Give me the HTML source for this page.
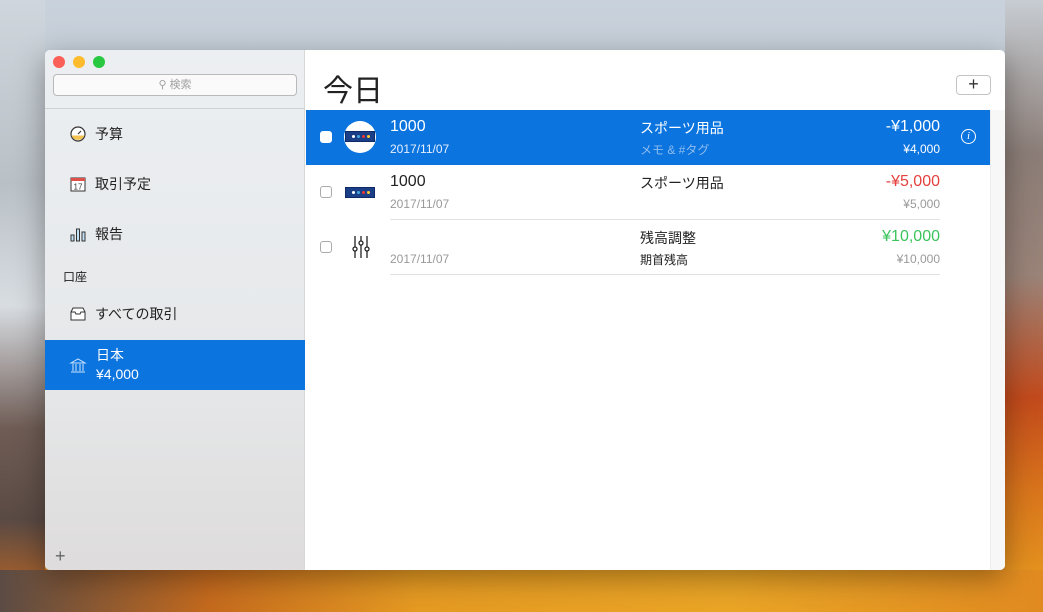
<!DOCTYPE html>
<html><head><meta charset="utf-8"><style>
*{margin:0;padding:0;box-sizing:border-box}
body{width:1043px;height:612px;overflow:hidden;position:relative;font-family:"Liberation Sans","Noto Sans CJK JP",sans-serif;
background:linear-gradient(180deg,#c9d2dc 0%,#b7c0c9 40%,#7d6a62 70%,#c9731f 88%,#e89a22 100%);}
.bgl{position:absolute;left:0;top:0;width:45px;height:612px;background:linear-gradient(180deg,#cfd6dd 0%,#b9c0c6 30%,#d8dde2 50%,#6f5c55 70%,#5a4a44 85%,#c86a20 100%)}
.bgr{position:absolute;right:0;top:0;width:38px;height:612px;background:linear-gradient(180deg,#c7cdd3 0%,#8b7d77 25%,#9a8378 45%,#c24a1c 65%,#d8741c 80%,#e9a020 100%)}
.bgb{position:absolute;left:0;top:570px;width:1043px;height:42px;background:linear-gradient(90deg,#5b4b44 0%,#c46a1e 20%,#e59a22 40%,#eaa526 70%,#e08a20 100%)}
.win{position:absolute;left:45px;top:50px;width:960px;height:520px;border-radius:5px;overflow:hidden;box-shadow:0 8px 30px rgba(0,0,0,.35);background:#fff}
.side{position:absolute;left:0;top:0;width:260px;height:520px;background:linear-gradient(180deg,#eceff2 0%,#e6e8ea 60%,#dedcdc 100%);border-right:1px solid #d8d8d8}
.dot{position:absolute;top:6px;width:12px;height:12px;border-radius:50%}
.search{position:absolute;left:8px;top:24px;width:244px;height:22px;border:1px solid #b9b9b9;border-radius:4px;background:#fafafa;font-size:11px;color:#a0a0a0;text-align:center;line-height:20px}
.sep{position:absolute;left:0;top:58px;width:260px;height:1px;background:#d0d0d0}
.item{position:absolute;left:24px;font-size:14px;color:#222;display:flex;align-items:center;gap:8px}
.sel{position:absolute;left:0;top:290px;width:260px;height:50px;background:#0b74de;color:#fff}
.main{position:absolute;left:261px;top:0;width:699px;height:520px}
h1{position:absolute;left:17px;top:16px;font-size:30px;font-weight:normal;color:#222}
.plus{position:absolute;left:650px;top:25px;width:35px;height:20px;border:1px solid #c4c4c4;border-radius:4px;font-size:18px;line-height:17px;text-align:center;color:#333}
.scroll{position:absolute;left:684px;top:60px;width:15px;height:460px;background:#f7f7f7;border-left:1px solid #ececec}
.row{position:absolute;left:0;width:684px;height:55px}
.cb{position:absolute;left:14px;top:21px;width:12px;height:12px;border:1px solid #aaa;border-radius:3px;background:#fff}
.t1{position:absolute;left:84px;top:8px;font-size:16px}
.t2{position:absolute;left:84px;top:32px;font-size:12px;color:#999}
.c1{position:absolute;left:334px;top:8px;font-size:14px}
.c2{position:absolute;left:334px;top:31px;font-size:12px}
.a1{position:absolute;right:50px;top:8px;font-size:16px;text-align:right}
.a2{position:absolute;right:50px;top:32px;font-size:12px;color:#999;text-align:right}
.line{position:absolute;left:84px;right:50px;bottom:0;height:1px;background:#e2e2e2}
.logo{position:absolute;left:39px;top:22px;width:30px;height:11px;background:#1b3f87;border:1px solid #0e2a66}
.logo i{position:absolute;top:3px;width:3px;height:3px;border-radius:50%}
</style></head><body>
<div class="bgl"></div><div class="bgr"></div><div class="bgb"></div>
<div class="win">
<div class="side">
<div class="dot" style="left:8px;background:#fc5f57"></div>
<div class="dot" style="left:28px;background:#fdbc2e"></div>
<div class="dot" style="left:48px;background:#28c840"></div>
<div class="search">&#9906; 検索</div>
<div class="sep"></div>
<div class="item" style="top:74px"><svg width="18" height="18" viewBox="0 0 18 18"><circle cx="9" cy="9" r="7" fill="#fff" stroke="#333" stroke-width="1.2"/><path d="M2.5 10.5A7 7 0 0 0 15.5 10.5Z" fill="#f2c14e"/><path d="M9 9L12 6" stroke="#333" stroke-width="1.2"/></svg>予算</div>
<div class="item" style="top:124px"><svg width="18" height="18" viewBox="0 0 18 18"><rect x="2" y="3" width="14" height="13" fill="#fff" stroke="#333"/><rect x="2" y="3" width="14" height="3" fill="#e0504a"/><text x="9" y="14.5" font-size="8" text-anchor="middle" fill="#333" font-family="Liberation Sans">17</text></svg>取引予定</div>
<div class="item" style="top:174px"><svg width="18" height="18" viewBox="0 0 18 18"><rect x="2" y="10" width="3" height="6" fill="#bfe0f5" stroke="#333"/><rect x="7.5" y="4" width="3" height="12" fill="#bfe0f5" stroke="#333"/><rect x="13" y="7" width="3" height="9" fill="#bfe0f5" stroke="#333"/></svg>報告</div>
<div style="position:absolute;left:18px;top:218px;font-size:12px;color:#222">口座</div>
<div class="item" style="top:254px"><svg width="18" height="18" viewBox="0 0 18 18"><path d="M2 7L4 3H14L16 7V15H2Z" fill="#fff" stroke="#333"/><path d="M2 7H6L7 9H11L12 7H16" fill="none" stroke="#333"/></svg>すべての取引</div>
<div class="sel"><svg style="position:absolute;left:24px;top:17px" width="18" height="18" viewBox="0 0 18 18" fill="none" stroke="#cfe6ff"><path d="M2 6L9 2L16 6Z"/><path d="M4 7V14M7 7V14M11 7V14M14 7V14M2 15H16"/></svg><div style="position:absolute;left:51px;top:5px;font-size:14px">日本</div><div style="position:absolute;left:51px;top:26px;font-size:14px">¥4,000</div></div>
<div style="position:absolute;left:10px;top:496px;font-size:18px;color:#666;font-weight:300">+</div>
</div>
<div class="main">
<h1>今日</h1>
<div class="plus">+</div>
<div class="scroll"></div>
<div class="row" style="top:60px;background:#0b74de;color:#fff">
<div class="cb" style="border-color:#fff"></div>
<div style="position:absolute;left:38px;top:11px;width:32px;height:32px;border-radius:50%;background:#fff"><div class="logo" style="left:1px;top:10px;background:#1b3f87"><i style="left:6px;background:#fff"></i><i style="left:11px;background:#4ad"></i><i style="left:16px;background:#e33"></i><i style="left:21px;background:#fc3"></i></div></div>
<div class="t1">1000</div><div class="t2" style="color:#e6f0ff">2017/11/07</div>
<div class="c1">スポーツ用品</div><div class="c2" style="color:#8fbcef">メモ &amp; #タグ</div>
<div class="a1">-¥1,000</div><div class="a2" style="color:#fff">¥4,000</div>
<div style="position:absolute;left:655px;top:19px;width:15px;height:15px;border:1px solid #fff;border-radius:50%;font-size:11px;font-style:italic;text-align:center;line-height:13px;font-family:'Liberation Serif',serif">i</div>
</div>
<div class="row" style="top:115px;color:#222">
<div class="cb"></div><div class="logo"><i style="left:6px;background:#fff"></i><i style="left:11px;background:#4ad"></i><i style="left:16px;background:#e33"></i><i style="left:21px;background:#fc3"></i></div>
<div class="t1">1000</div><div class="t2">2017/11/07</div>
<div class="c1">スポーツ用品</div>
<div class="a1" style="color:#e5413e">-¥5,000</div><div class="a2">¥5,000</div>
<div class="line"></div></div>
<div class="row" style="top:170px;color:#222">
<div class="cb"></div>
<svg style="position:absolute;left:45px;top:14px" width="20" height="26" viewBox="0 0 20 26" fill="none" stroke="#222" stroke-width="1.3"><path d="M4 2V24M10 2V24M16 2V24"/><circle cx="4" cy="15" r="2" fill="#fff"/><circle cx="10" cy="9" r="2" fill="#fff"/><circle cx="16" cy="15" r="2" fill="#fff"/></svg>
<div class="t2">2017/11/07</div>
<div class="c1">残高調整</div><div class="c2">期首残高</div>
<div class="a1" style="color:#3cc45c">¥10,000</div><div class="a2">¥10,000</div>
<div class="line"></div></div>
</div>
</div>
</body></html>
